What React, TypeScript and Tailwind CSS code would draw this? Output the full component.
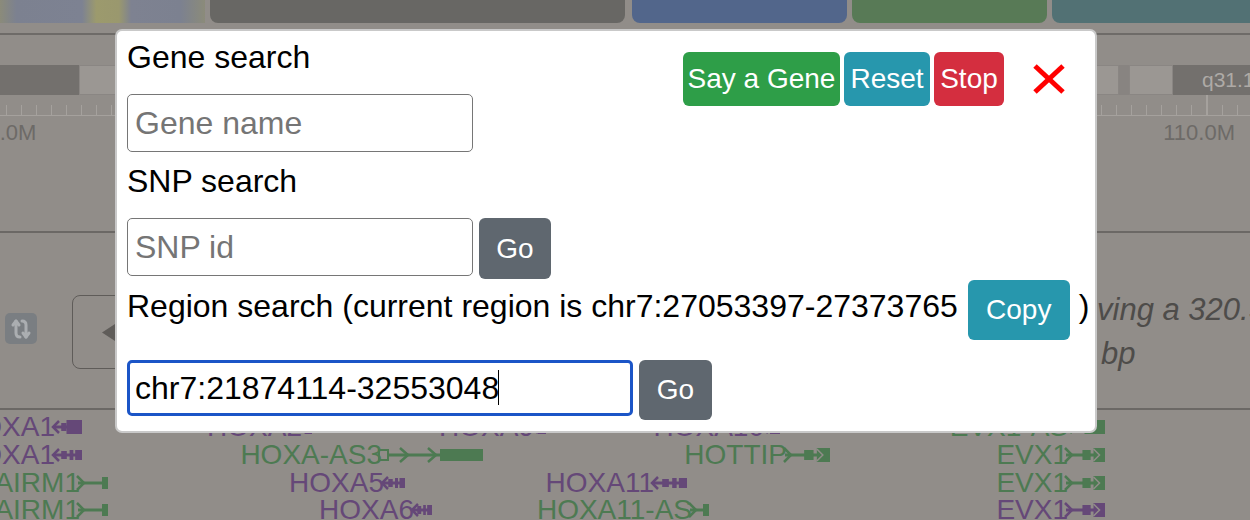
import React from 'react'

type GlyphKind = 'rev' | 'rev3' | 'fwd' | 'fwd2' | 'as3'

const geneColors = {
  purple: { hex: '#654878', text: 'text-[#654878]' },
  green: { hex: '#4d7a52', text: 'text-[#4d7a52]' },
}

function Glyph({ kind, w, c }: { kind: GlyphKind; w: number; c: string }) {
  if (kind === 'rev') {
    return (
      <svg width={w} height={20} viewBox={`0 0 ${w} 20`}>
        <line x1={2} y1={10} x2={w} y2={10} stroke={c} strokeWidth={3} />
        <polyline points="8,4 2,10 8,16" fill="none" stroke={c} strokeWidth={2.5} />
        <rect x={w * 0.33} y={6} width={w * 0.17} height={8} fill={c} />
        <rect x={w * 0.5} y={3} width={w * 0.5} height={14} fill={c} />
      </svg>
    )
  }
  if (kind === 'rev3') {
    return (
      <svg width={w} height={20} viewBox={`0 0 ${w} 20`}>
        <line x1={2} y1={10} x2={w} y2={10} stroke={c} strokeWidth={3} />
        <polyline points="8,4 2,10 8,16" fill="none" stroke={c} strokeWidth={2.5} />
        <rect x={w * 0.33} y={6} width={w * 0.18} height={8} fill={c} />
        <rect x={w * 0.6} y={5} width={w * 0.12} height={10} fill={c} />
        <rect x={w * 0.78} y={5} width={w * 0.22} height={10} fill={c} />
      </svg>
    )
  }
  if (kind === 'fwd') {
    return (
      <svg width={w} height={20} viewBox={`0 0 ${w} 20`}>
        <line x1={2} y1={10} x2={w} y2={10} stroke={c} strokeWidth={3} />
        <polyline points="1,3 8,10 1,17" fill="none" stroke={c} strokeWidth={2.5} />
        <rect x={w - 6} y={4} width={6} height={12} fill={c} />
      </svg>
    )
  }
  if (kind === 'fwd2') {
    return (
      <svg width={w} height={20} viewBox={`0 0 ${w} 20`}>
        <line x1={2} y1={10} x2={w} y2={10} stroke={c} strokeWidth={3} />
        <polyline points="1,3 8,10 1,17" fill="none" stroke={c} strokeWidth={2.5} />
        <rect x={w * 0.45} y={5} width={w * 0.2} height={10} fill={c} />
        <rect x={w * 0.72} y={3} width={w * 0.28} height={14} fill={c} />
        <polyline points={`${w * 0.72},4 ${w * 0.72 + 6},10 ${w * 0.72},16`} fill="none" stroke="#918d89" strokeWidth={1.5} />
      </svg>
    )
  }
  // HOXA-AS3 style transcript
  return (
    <svg width={w} height={20} viewBox={`0 0 ${w} 20`}>
      <rect x={1} y={5} width={9} height={10} fill="none" stroke={c} strokeWidth={2} />
      <line x1={10} y1={10} x2={w} y2={10} stroke={c} strokeWidth={3} />
      <polyline points="22,3 30,10 22,17" fill="none" stroke={c} strokeWidth={2.5} />
      <polyline points="50,3 58,10 50,17" fill="none" stroke={c} strokeWidth={2.5} />
      <rect x={w - 43} y={4} width={43} height={12} fill={c} />
    </svg>
  )
}

function Gene({
  pos,
  label,
  color,
  kind,
  w,
}: {
  pos: string
  label: string
  color: 'purple' | 'green'
  kind: GlyphKind
  w: number
}) {
  const col = geneColors[color]
  return (
    <div className={`absolute flex h-[32px] items-center ${pos}`}>
      <span className={`absolute right-[calc(100%-4px)] top-0 whitespace-nowrap text-[28px] leading-[32px] ${col.text}`}>
        {label}
      </span>
      <Glyph kind={kind} w={w} c={col.hex} />
    </div>
  )
}

const ticks = Array.from({ length: 84 }, (_, i) => i)

export default function App() {
  return (
    <div className="relative h-[520px] w-[1250px] overflow-hidden bg-[#918d89] font-['Liberation_Sans',Arial,sans-serif]">
      {/* Top button row (dimmed) */}
      <div className="flex h-[23px]">
        <div className="w-[205px] shrink-0 bg-[linear-gradient(90deg,#8b8b7a_0%,#7c8190_8%,#7d8292_40%,#9c9a6d_47%,#9a986e_58%,#7e8291_64%,#7c8190_88%,#8b8b7a_100%)]" />
        <div className="ml-[5px] w-[415px] shrink-0 rounded-b-[8px] bg-[#686764]" />
        <div className="ml-[7px] w-[215px] shrink-0 rounded-b-[8px] bg-[#52668b]" />
        <div className="ml-[5px] w-[195px] shrink-0 rounded-b-[8px] bg-[#587a56]" />
        <div className="ml-[5px] flex-1 rounded-bl-[8px] bg-[#527174]" />
      </div>

      <div className="mt-[10px] h-[2px] bg-[#6e6b68]" />
      <div className="h-[30px]" />

      {/* Ideogram */}
      <div className="flex h-[30px]">
        <div className="w-[79px] shrink-0 bg-[#73706d]" />
        <div className="w-[1040px] shrink-0 border border-[#8a8683] bg-[#9b9793]" />
        <div className="w-[10px] shrink-0 bg-[#888481]" />
        <div className="w-[44px] shrink-0 border border-[#8a8683] bg-[#9b9793]" />
        <div className="flex min-w-0 flex-1 items-center whitespace-nowrap bg-[#73706d] pl-[29px] text-[21px] text-[#aeaaa6]">q31.1</div>
      </div>

      {/* Ruler */}
      <div className="flex h-[21px] items-end gap-[14px] border-b border-[#a5a19d] pl-[6px]">
        {ticks.map((i) =>
          i === 80 ? (
            <div key={i} className="h-[20px] w-[2px] shrink-0 bg-[#a5a19d]" />
          ) : (
            <div key={i} className="h-[10px] w-px shrink-0 bg-[#a5a19d]" />
          )
        )}
      </div>

      <div className="flex h-[115px] justify-between pt-[4px] text-[22px] leading-[26px] text-[#6d6a67]">
        <span className="ml-[-37px]">100.0M</span>
        <span className="mr-[15px]">110.0M</span>
      </div>

      <div className="h-[2px] bg-[#6b6865]" />

      {/* Navigation area */}
      <div className="flex h-[175px]">
        <div className="flex w-[1097px] shrink-0 items-start">
          <div className="ml-[5px] mt-[80px] flex h-[31px] w-[32px] items-center justify-center rounded-[5px] bg-[#7a7e82]">
            <svg width="22" height="24" viewBox="0 0 22 24" fill="none" stroke="#abaeb1" strokeWidth="3" strokeLinecap="round" strokeLinejoin="round">
              <path d="M6 4v12q0 4 4 4" />
              <path d="M3 8l3-4 3 4" />
              <path d="M12 4q4 0 4 4v12" />
              <path d="M13 16l3 4 3-4" />
            </svg>
          </div>
          <div className="ml-[35px] mt-[62px] flex h-[74px] w-[120px] items-center rounded-[8px] border-[1.5px] border-[#5f5c59] pl-[29px]">
            <svg width="13" height="17" viewBox="0 0 13 17">
              <polygon points="13,0 0,8.5 13,17" fill="#5f5c59" />
            </svg>
          </div>
        </div>
        <div className="pt-[55px] text-[31px] italic leading-[44px] text-[#4e4c4a]">
          <p className="whitespace-nowrap">ving a 320.37 kb</p>
          <p className="pl-[4px]">bp</p>
        </div>
      </div>

      <div className="h-[2px] bg-[#6b6865]" />

      {/* Gene tracks */}
      <div className="relative h-[109px]">
        <Gene pos="left-[51px] top-[1px]" label="HOXA1" color="purple" kind="rev" w={31} />
        <Gene pos="left-[298px] top-[1px]" label="HOXA2" color="purple" kind="rev" w={14} />
        <Gene pos="left-[530px] top-[1px]" label="HOXA9" color="purple" kind="rev" w={16} />
        <Gene pos="left-[760px] top-[1px]" label="HOXA10" color="purple" kind="rev" w={20} />
        <Gene pos="left-[1064px] top-[1px]" label="EVX1-AS" color="green" kind="rev" w={41} />

        <Gene pos="left-[51px] top-[29px]" label="HOXA1" color="purple" kind="rev3" w={31} />
        <Gene pos="left-[378px] top-[29px]" label="HOXA-AS3" color="green" kind="as3" w={105} />
        <Gene pos="left-[783px] top-[29px]" label="HOTTIP" color="green" kind="fwd2" w={47} />
        <Gene pos="left-[1064px] top-[29px]" label="EVX1" color="green" kind="fwd2" w={41} />

        <Gene pos="left-[76px] top-[57px]" label="HOTAIRM1" color="green" kind="fwd" w={32} />
        <Gene pos="left-[380px] top-[57px]" label="HOXA5" color="purple" kind="rev3" w={25} />
        <Gene pos="left-[650px] top-[57px]" label="HOXA11" color="purple" kind="rev3" w={37} />
        <Gene pos="left-[1064px] top-[57px]" label="EVX1" color="green" kind="fwd2" w={41} />

        <Gene pos="left-[76px] top-[84px]" label="HOTAIRM1" color="green" kind="fwd" w={32} />
        <Gene pos="left-[410px] top-[84px]" label="HOXA6" color="purple" kind="rev3" w={22} />
        <Gene pos="left-[688px] top-[84px]" label="HOXA11-AS" color="green" kind="fwd" w={21} />
        <Gene pos="left-[1064px] top-[84px]" label="EVX1" color="purple" kind="fwd2" w={41} />
      </div>

      {/* Search modal */}
      <div className="absolute left-[115px] top-[29px] h-[404px] w-[982px] rounded-[7px] border-2 border-[#c9c9c9] bg-white px-[10px] pt-[2px] text-[32px] text-black">
        <div className="flex items-start justify-between">
          <div className="flex flex-col">
            <p className="leading-[48px]">Gene search</p>
            <input
              placeholder="Gene name"
              className="mt-[13px] h-[58px] w-[346px] rounded-[5px] border-[1.5px] border-[#767676] px-[7px] text-[32px] outline-none placeholder:text-[#757575]"
            />
          </div>
          <div className="mt-[19px] flex items-center">
            <div className="flex gap-[4px] text-[28px] text-white">
              <button className="flex h-[54px] w-[157px] shrink-0 items-center justify-center rounded-[6px] bg-[#2e9e48]">Say a Gene</button>
              <button className="flex h-[54px] w-[86px] shrink-0 items-center justify-center rounded-[6px] bg-[#2797ad]">Reset</button>
              <button className="flex h-[54px] w-[70px] shrink-0 items-center justify-center rounded-[6px] bg-[#d42e3f]">Stop</button>
            </div>
            <svg className="ml-[28px] mr-[19px] shrink-0" width="34" height="32" viewBox="0 0 34 32">
              <line x1="3" y1="3" x2="31" y2="29" stroke="#ff0000" strokeWidth="5" />
              <line x1="31" y1="3" x2="3" y2="29" stroke="#ff0000" strokeWidth="5" />
            </svg>
          </div>
        </div>

        <p className="mt-[5px] leading-[48px]">SNP search</p>
        <div className="mt-[13px] flex items-start gap-[6px]">
          <input
            placeholder="SNP id"
            className="h-[58px] w-[346px] shrink-0 rounded-[5px] border-[1.5px] border-[#767676] px-[7px] text-[32px] outline-none placeholder:text-[#757575]"
          />
          <button className="h-[61px] w-[72px] shrink-0 rounded-[6px] bg-[#5f676f] text-[28px] text-white">Go</button>
        </div>

        <div className="mt-[1px] flex items-start">
          <span className="mt-[2px] shrink-0 whitespace-nowrap leading-[48px]">
            Region search (current region is chr7:27053397-27373765
          </span>
          <button className="ml-[10px] h-[60px] w-[102px] shrink-0 rounded-[6px] bg-[#2797ad] text-[28px] text-white">Copy</button>
          <span className="ml-[9px] mt-[2px] shrink-0 leading-[48px]">)</span>
        </div>

        <div className="mt-[20px] flex items-start gap-[6px]">
          <div className="relative shrink-0">
            <input
              defaultValue="chr7:21874114-32553048"
              className="h-[56px] w-[506px] rounded-[5px] border-[3px] border-[#1b55c7] px-[5px] text-[32px] text-black outline-none"
            />
            <span className="absolute left-[371px] top-[10px] h-[35px] w-px bg-black" />
          </div>
          <button className="h-[60px] w-[73px] shrink-0 rounded-[6px] bg-[#5f676f] text-[28px] text-white">Go</button>
        </div>
      </div>
    </div>
  )
}
